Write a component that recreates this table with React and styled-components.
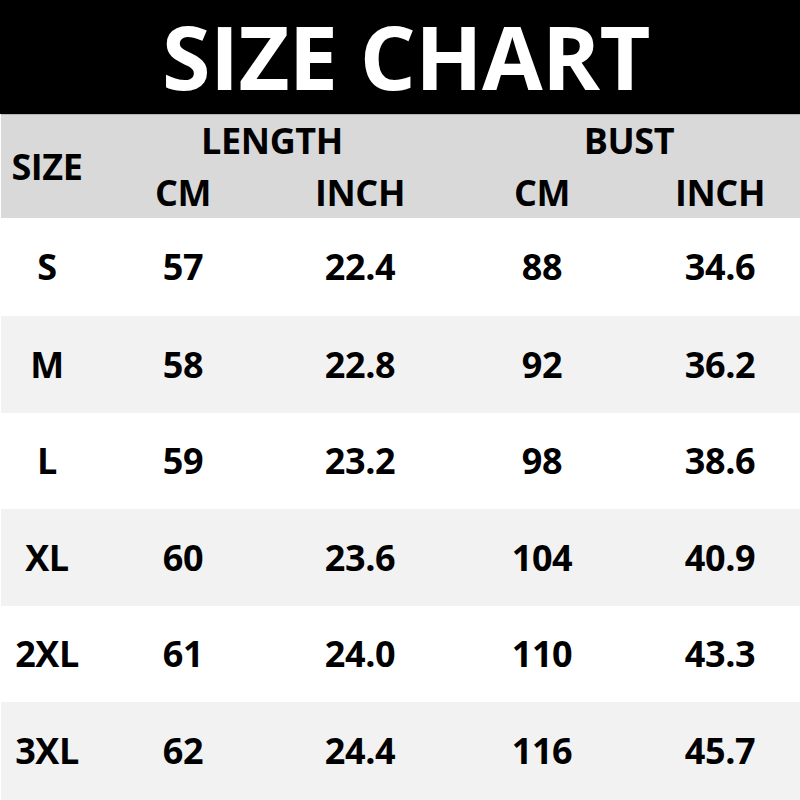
import React from "react";
import styled, { createGlobalStyle } from "styled-components";

const GlobalStyle = createGlobalStyle`
  html, body {
    margin: 0;
    padding: 0;
    background: #fff;
  }
  body {
    font-family: "Open Sans", "Liberation Sans", sans-serif;
    color: #000;
  }
`;

const Page = styled.div`
  width: 800px;
  height: 800px;
  overflow: hidden;
  background: #fff;
`;

const TitleBar = styled.div`
  height: 114px;
  background: #000;
  display: flex;
  align-items: center;
  justify-content: center;
  padding-left: 12px;
  box-sizing: border-box;
`;

const Title = styled.h1`
  margin: 0;
  color: #fff;
  font-size: 88px;
  font-weight: 700;
  line-height: 1.2;
  letter-spacing: -0.6px;
`;

const Table = styled.div`
  display: grid;
  grid-template-columns: 92px 180px 178px 182px 168px;
  margin-left: 1px;
`;

const HeadBand = styled.div`
  grid-column: 1 / -1;
  display: grid;
  grid-template-columns: subgrid;
  grid-template-rows: 52px 51px;
  background: #d9d9d9;
  border-top: 1px solid #b5b5b5;
`;

const Row = styled.div`
  grid-column: 1 / -1;
  display: grid;
  grid-template-columns: subgrid;
  height: ${(p) => p.$h}px;
  background: ${(p) => (p.$alt ? "#f2f2f2" : "#fff")};
`;

const Cell = styled.div`
  display: flex;
  align-items: center;
  justify-content: center;
  font-size: 36px;
  font-weight: 700;
  line-height: 1.2;
  letter-spacing: -0.4px;
  grid-column: ${(p) => p.$col || "auto"};
  grid-row: ${(p) => p.$row || "auto"};
  padding-left: ${(p) => (p.$last ? "6px" : "0")};
  padding-right: ${(p) => (p.$pr ? "4px" : "0")};
`;

const rows = [
  ["S", "57", "22.4", "88", "34.6"],
  ["M", "58", "22.8", "92", "36.2"],
  ["L", "59", "23.2", "98", "38.6"],
  ["XL", "60", "23.6", "104", "40.9"],
  ["2XL", "61", "24.0", "110", "43.3"],
  ["3XL", "62", "24.4", "116", "45.7"],
];

const heights = [98, 97, 96, 97, 96, 98];

export default function App() {
  return (
    <Page>
      <GlobalStyle />
      <TitleBar>
        <Title>SIZE CHART</Title>
      </TitleBar>
      <Table>
        <HeadBand>
          <Cell $col="1" $row="1 / 3">SIZE</Cell>
          <Cell $col="2 / 4" $row="1">LENGTH</Cell>
          <Cell $col="4 / 6" $row="1" $last>BUST</Cell>
          <Cell $col="2" $row="2">CM</Cell>
          <Cell $col="3" $row="2" $pr>INCH</Cell>
          <Cell $col="4" $row="2">CM</Cell>
          <Cell $col="5" $row="2" $last>INCH</Cell>
        </HeadBand>
        {rows.map((r, i) => (
          <Row key={r[0]} $alt={i % 2 === 1} $h={heights[i]}>
            {r.map((v, j) => (
              <Cell key={j} $last={j === 4} $pr={j === 2}>
                {v}
              </Cell>
            ))}
          </Row>
        ))}
      </Table>
    </Page>
  );
}
